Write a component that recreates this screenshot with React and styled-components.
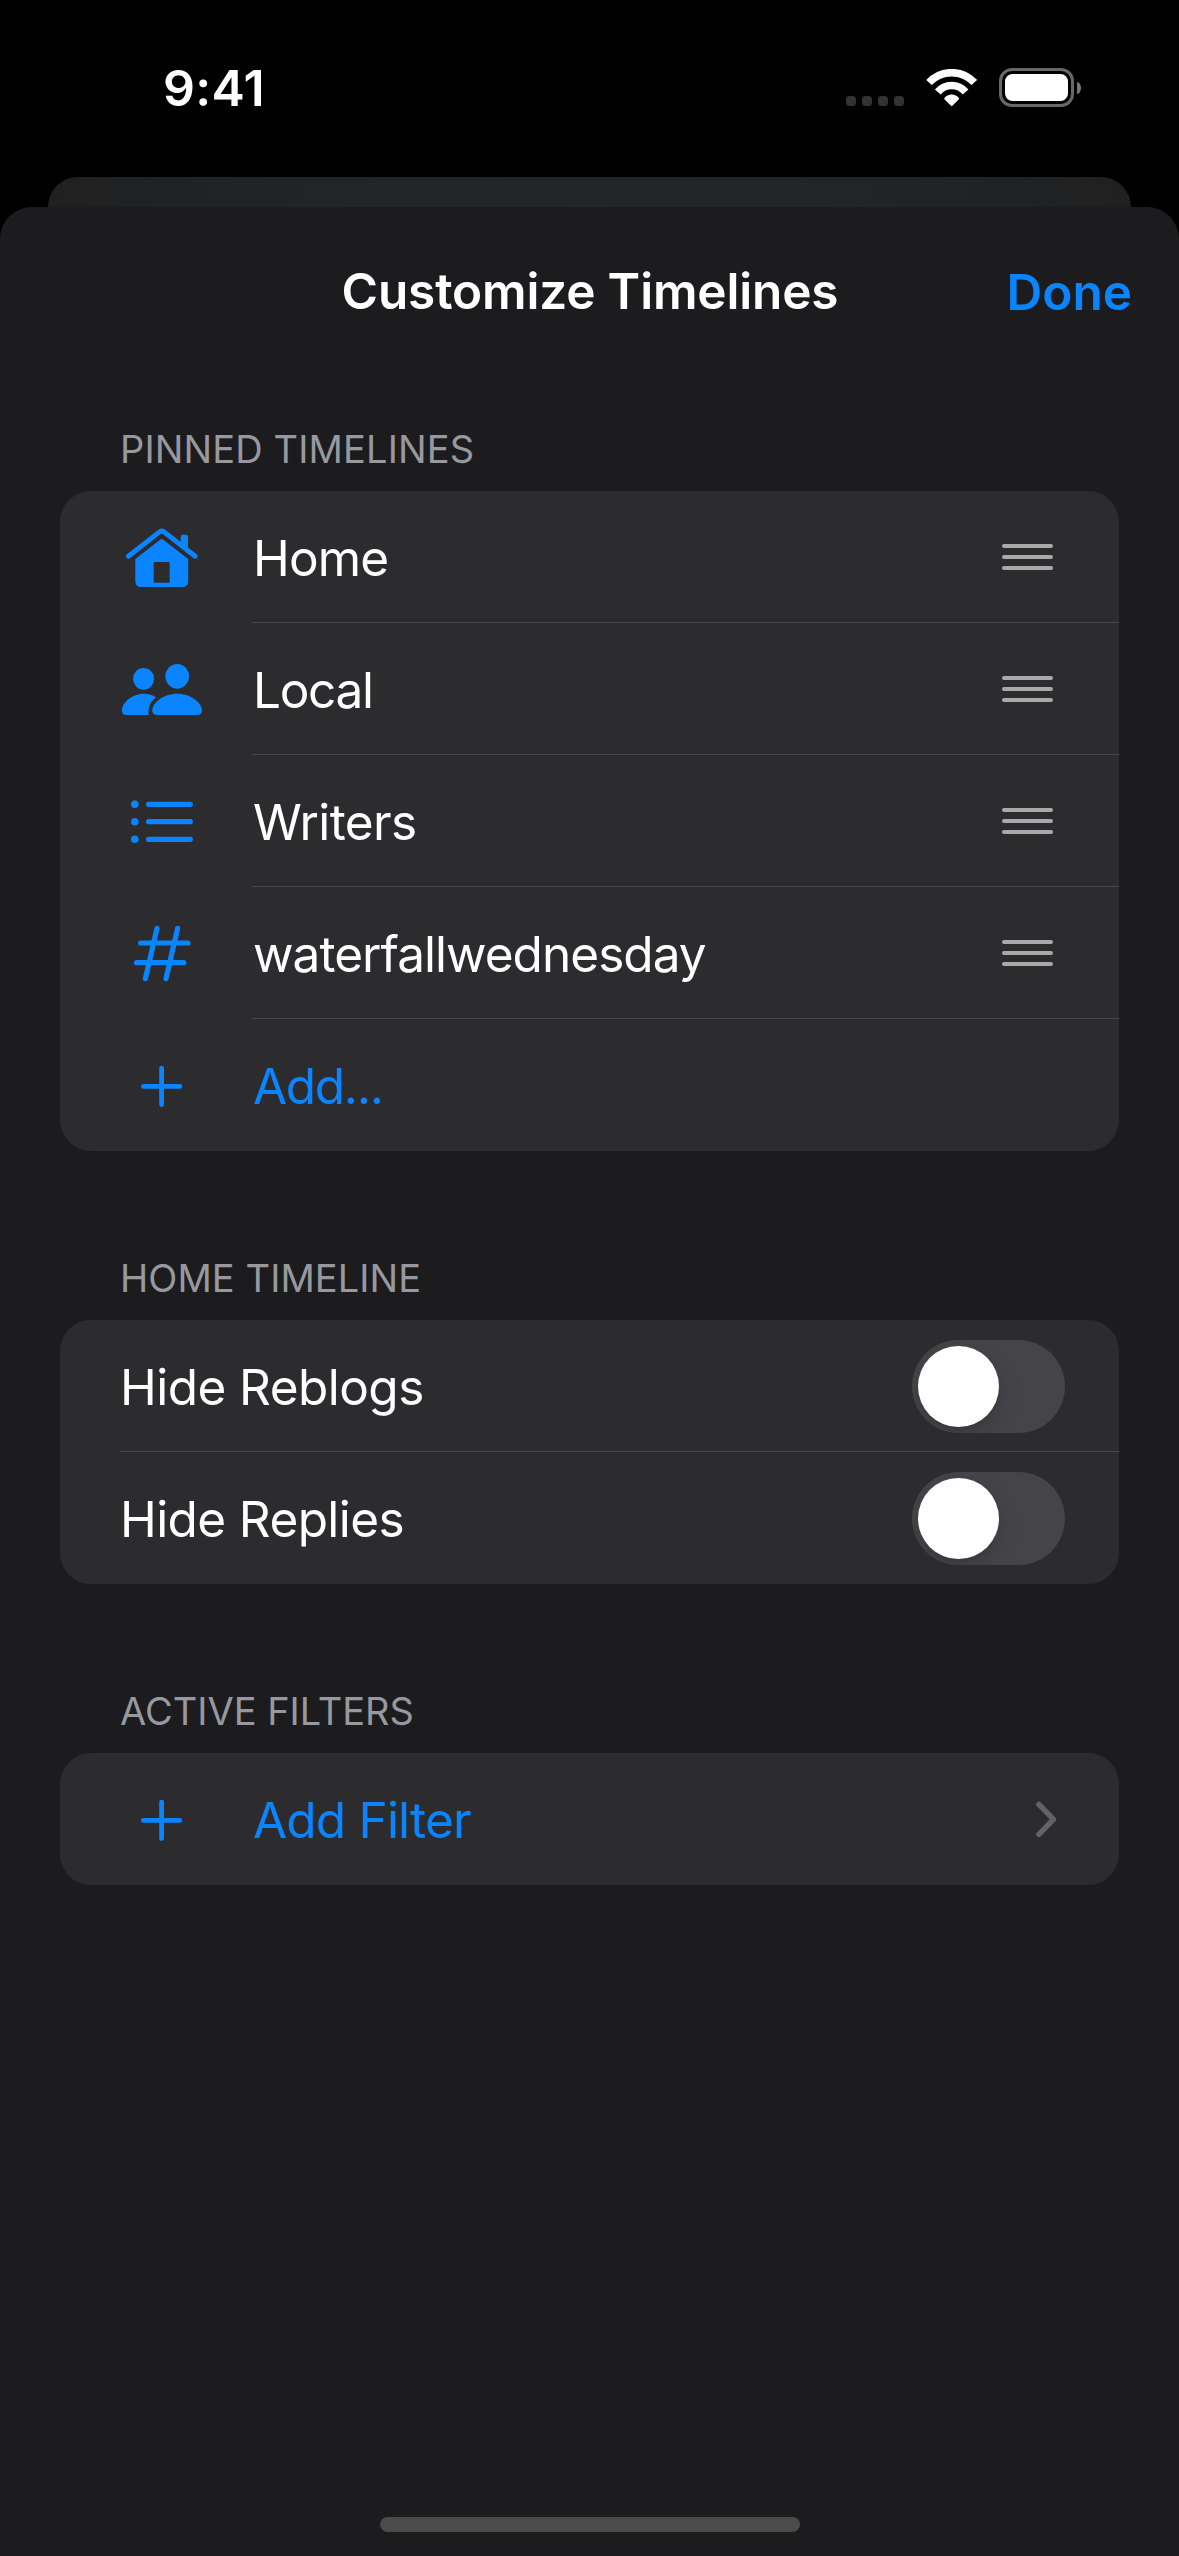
import React, { useState } from "react";
import styled, { createGlobalStyle } from "styled-components";

const GlobalStyle = createGlobalStyle`
  *, *::before, *::after { box-sizing: border-box; }
  body {
    margin: 0;
    background: #000;
    font-family: Inter, "Liberation Sans", sans-serif;
    font-size: 49.5px;
    color: #fff;
  }
`;

const BLUE = "#0a84ff";

const Screen = styled.div`
  width: 1179px;
  height: 2556px;
  display: flex;
  flex-direction: column;
  background: #000;
  overflow: hidden;
`;

const StatusBar = styled.header`
  height: 177px;
  flex: none;
  display: flex;
  align-items: flex-start;
  justify-content: space-between;
  padding: 68px 98px 0 163px;
`;

const Time = styled.span`
  font-size: 50px;
  font-weight: 600;
  line-height: 40px;
  letter-spacing: ${(p) => p.$tracking}px;
`;

const StatusIcons = styled.div`
  height: 39px;
  display: flex;
  align-items: flex-start;
`;

const SignalDots = styled.div`
  display: flex;
  gap: 6px;
  margin: 28px 22px 0 0;
`;

const SignalDot = styled.i`
  width: 10px;
  height: 10px;
  border-radius: 3.5px;
  background: #333;
`;

const WifiIcon = styled.svg`
  display: block;
  width: 51px;
  height: 38px;
  margin: 1px 22px 0 0;
`;

const Battery = styled.div`
  width: 75px;
  height: 39px;
  padding: 3px;
  border: 3px solid #686868;
  border-radius: 13px;
`;

const BatteryLevel = styled.div`
  height: 27px;
  border-radius: 7.5px;
  background: #fff;
`;

const BatteryNub = styled.div`
  width: 4px;
  height: 12px;
  margin: 13.5px 0 0 3px;
  border-radius: 0 4px 4px 0 / 0 6px 6px 0;
  background: #777;
`;

const SheetBehind = styled.div`
  flex: none;
  height: 30px;
  margin: 0 48px;
  border-radius: 30px 30px 0 0;
  background: linear-gradient(90deg, #202021 0%, #222324 20%, #232529 50%, #222324 80%, #202021 100%);
`;

const Sheet = styled.main`
  flex: 1;
  display: flex;
  flex-direction: column;
  border-radius: 32px 32px 0 0;
  background: #1c1c1e;
`;

const NavBar = styled.div`
  height: 168px;
  flex: none;
  display: grid;
  grid-template-columns: 1fr auto 1fr;
  align-items: center;
  padding: 0 47px 0 48px;
`;

const Title = styled.h1`
  grid-column: 2;
  margin: 0;
  font-size: 49.5px;
  font-weight: 600;
  line-height: 60px;
  letter-spacing: ${(p) => p.$tracking}px;
`;

const DoneButton = styled.button`
  justify-self: end;
  border: 0;
  padding: 1px 0 0;
  background: none;
  font: 600 49.5px/60px Inter, "Liberation Sans", sans-serif;
  letter-spacing: ${(p) => p.$tracking}px;
  color: ${BLUE};
`;

const Section = styled.section`
  display: flex;
  flex-direction: column;
  padding: 0 60px;
  margin-top: ${(p) => p.$gap}px;
`;

const SectionHeader = styled.h2`
  margin: 0;
  height: 68px;
  padding-left: 60px;
  font-size: 38px;
  font-weight: 400;
  line-height: 52px;
  letter-spacing: ${(p) => p.$tracking}px;
  color: #98989f;
`;

const Card = styled.div`
  border-radius: 31px;
  background: #2c2c2e;
  overflow: hidden;
`;

const Row = styled.div`
  height: 132px;
  display: flex;
  padding-left: 60px;
`;

const IconSlot = styled.div`
  width: 132px;
  flex: none;
  display: flex;
  align-items: center;
`;

const Glyph = styled.svg`
  display: block;
  width: 84px;
  height: 84px;
  overflow: visible;
  color: ${BLUE};
`;

const RowBody = styled.div`
  flex: 1;
  display: flex;
  align-items: center;
  justify-content: space-between;
  padding-right: ${(p) => p.$end}px;
  border-bottom: 1px solid ${(p) => (p.$last ? "transparent" : "#464648")};
`;

const Label = styled.span`
  line-height: 60px;
  padding: 2px 0 0 ${(p) => (p.$flush ? 0 : 1)}px;
  letter-spacing: ${(p) => p.$tracking}px;
  white-space: nowrap;
  color: ${(p) => (p.$action ? BLUE : "#fff")};
`;

const Handle = styled.div`
  width: 51px;
  display: flex;
  flex-direction: column;
  gap: 7px;
`;

const HandleBar = styled.i`
  height: 4px;
  border-radius: 2px;
  background: #a9a9aa;
`;

const Switch = styled.button`
  width: 153px;
  height: 93px;
  margin-top: 2px;
  padding: 6px;
  border: 0;
  border-radius: 46.5px;
  display: flex;
  justify-content: ${(p) => (p.$on ? "flex-end" : "flex-start")};
  background: ${(p) => (p.$on ? "#30d158" : "#454449")};
  overflow: hidden;
`;

const Knob = styled.i`
  width: 81px;
  height: 81px;
  border-radius: 50%;
  background: #fff;
  box-shadow: 0 9px 24px rgba(0, 0, 0, 0.15), 0 3px 3px rgba(0, 0, 0, 0.06);
`;

const Chevron = styled.svg`
  display: block;
  width: 22px;
  height: 38px;
`;

const HomeIndicator = styled.div`
  width: 420px;
  height: 15px;
  margin: auto auto 24px;
  border-radius: 7.5px;
  background: #4b4b4c;
`;

const HouseGlyph = () => (
  <Glyph viewBox="0 0 84 84" fill="currentColor">
    <path d="M8.4 41.2 L39.6 16.9 Q41.8 15.3 44 16.9 L75.2 41.2" fill="none" stroke="currentColor" strokeWidth="5" strokeLinecap="round" strokeLinejoin="round" />
    <path d="M60.7 30 V21.7 Q60.7 19.7 62.7 19.7 H66 Q68 19.7 68 21.7 V36 Z" />
    <path fillRule="evenodd" d="M40.4 24.6 Q41.7 23.6 43 24.6 L68.2 44 V66 Q68.2 72 62.2 72 H21.3 Q15.3 72 15.3 66 V44 Z M35 47 Q33.7 47 33.7 48.3 V67.7 H49.7 V48.3 Q49.7 47 48.4 47 Z" />
  </Glyph>
);

const PeopleGlyph = () => (
  <Glyph viewBox="0 0 84 84" fill="currentColor">
    <ellipse cx="23.6" cy="31.8" rx="10.5" ry="10.9" />
    <ellipse cx="57.2" cy="29.3" rx="11.8" ry="12.4" />
    <path d="M2 63.4 C2 56.5 11 46.7 24 46.7 C28.6 46.7 32.6 48 36 50.2 C30.5 54.5 27.3 61.5 28.8 68 H7.4 C4 68 2 66.7 2 63.4 Z" />
    <path d="M32.3 63.4 C32.3 56.2 42.5 46.7 57.2 46.7 C71.8 46.7 82 56.2 82 63.4 C82 66.7 80 68 76.8 68 H37.5 C34.3 68 32.3 66.7 32.3 63.4 Z" />
  </Glyph>
);

const ListGlyph = () => (
  <Glyph viewBox="0 0 84 84" fill="currentColor" stroke="currentColor">
    {[25.3, 42.7, 60.3].map((y) => (
      <g key={y}>
        <circle cx="14.8" cy={y} r="3.8" stroke="none" />
        <path d={`M28.6 ${y} H70.3`} strokeWidth="5.2" strokeLinecap="round" />
      </g>
    ))}
  </Glyph>
);

const HashGlyph = () => (
  <Glyph viewBox="0 0 84 84" fill="none" stroke="currentColor" strokeWidth="5.2" strokeLinecap="round">
    <path d="M20.6 32 H68 M16.6 51.7 H63.8 M37 17.4 L25.4 67.6 M57.6 17.4 L46 67.6" />
  </Glyph>
);

const PlusGlyph = () => (
  <Glyph viewBox="0 0 84 84" fill="none" stroke="currentColor" strokeWidth="4.8" strokeLinecap="round">
    <path d="M23.4 43.4 H59.8 M41.6 25.2 V61.6" />
  </Glyph>
);

const DragHandle = () => (
  <Handle>
    <HandleBar />
    <HandleBar />
    <HandleBar />
  </Handle>
);

const Toggle = () => {
  const [on, setOn] = useState(false);
  return (
    <Switch $on={on} role="switch" aria-checked={on} onClick={() => setOn(!on)}>
      <Knob />
    </Switch>
  );
};

const timelines = [
  { name: "Home", icon: HouseGlyph, tracking: -0.9 },
  { name: "Local", icon: PeopleGlyph, tracking: -1.3 },
  { name: "Writers", icon: ListGlyph, tracking: -0.6 },
  { name: "waterfallwednesday", icon: HashGlyph, tracking: -0.95 },
];

const toggles = [
  { name: "Hide Reblogs", tracking: -0.55 },
  { name: "Hide Replies", tracking: -0.6 },
];

export default function App() {
  return (
    <Screen>
      <GlobalStyle />
      <StatusBar>
        <Time $tracking={0.3}>9:41</Time>
        <StatusIcons>
          <SignalDots>
            <SignalDot />
            <SignalDot />
            <SignalDot />
            <SignalDot />
          </SignalDots>
          <WifiIcon viewBox="438 87 153 114" fill="none" stroke="#fff" strokeWidth="22.5">
            <path d="M447 127.5 A93 93 0 0 1 583 127.5" />
            <path d="M473.3 156 A54.5 54.5 0 0 1 556.7 156" />
            <path d="M493 174.5 A28 28 0 0 1 537 174.5 Q538 176 536.6 177.4 L517 197 Q515 198.6 513 197 L493.4 177.4 Q492 176 493 174.5 Z" fill="#fff" stroke="none" />
          </WifiIcon>
          <Battery>
            <BatteryLevel />
          </Battery>
          <BatteryNub />
        </StatusIcons>
      </StatusBar>
      <SheetBehind />
      <Sheet>
        <NavBar>
          <Title $tracking={-0.15}>Customize Timelines</Title>
          <DoneButton $tracking={0}>Done</DoneButton>
        </NavBar>

        <Section $gap={48}>
          <SectionHeader $tracking={0.13}>PINNED TIMELINES</SectionHeader>
          <Card>
            {timelines.map(({ name, icon: Icon, tracking }) => (
              <Row key={name}>
                <IconSlot>
                  <Icon />
                </IconSlot>
                <RowBody $end={66}>
                  <Label $tracking={tracking}>{name}</Label>
                  <DragHandle />
                </RowBody>
              </Row>
            ))}
            <Row>
              <IconSlot>
                <PlusGlyph />
              </IconSlot>
              <RowBody $last $end={66}>
                <Label $action $tracking={-1.3}>Add...</Label>
              </RowBody>
            </Row>
          </Card>
        </Section>

        <Section $gap={101}>
          <SectionHeader $tracking={0.08}>HOME TIMELINE</SectionHeader>
          <Card>
            {toggles.map(({ name, tracking }, i) => (
              <Row key={name}>
                <RowBody $last={i === toggles.length - 1} $end={54}>
                  <Label $flush $tracking={tracking}>{name}</Label>
                  <Toggle />
                </RowBody>
              </Row>
            ))}
          </Card>
        </Section>

        <Section $gap={101}>
          <SectionHeader $tracking={0}>ACTIVE FILTERS</SectionHeader>
          <Card>
            <Row>
              <IconSlot>
                <PlusGlyph />
              </IconSlot>
              <RowBody $last $end={62}>
                <Label $action $tracking={-0.8}>Add Filter</Label>
                <Chevron viewBox="0 0 22 38" fill="none" stroke="#636365" strokeWidth="5.4" strokeLinecap="round" strokeLinejoin="round">
                  <path d="M3.9 4.4 L18.5 19.4 L3.9 34.4" />
                </Chevron>
              </RowBody>
            </Row>
          </Card>
        </Section>

        <HomeIndicator />
      </Sheet>
    </Screen>
  );
}
